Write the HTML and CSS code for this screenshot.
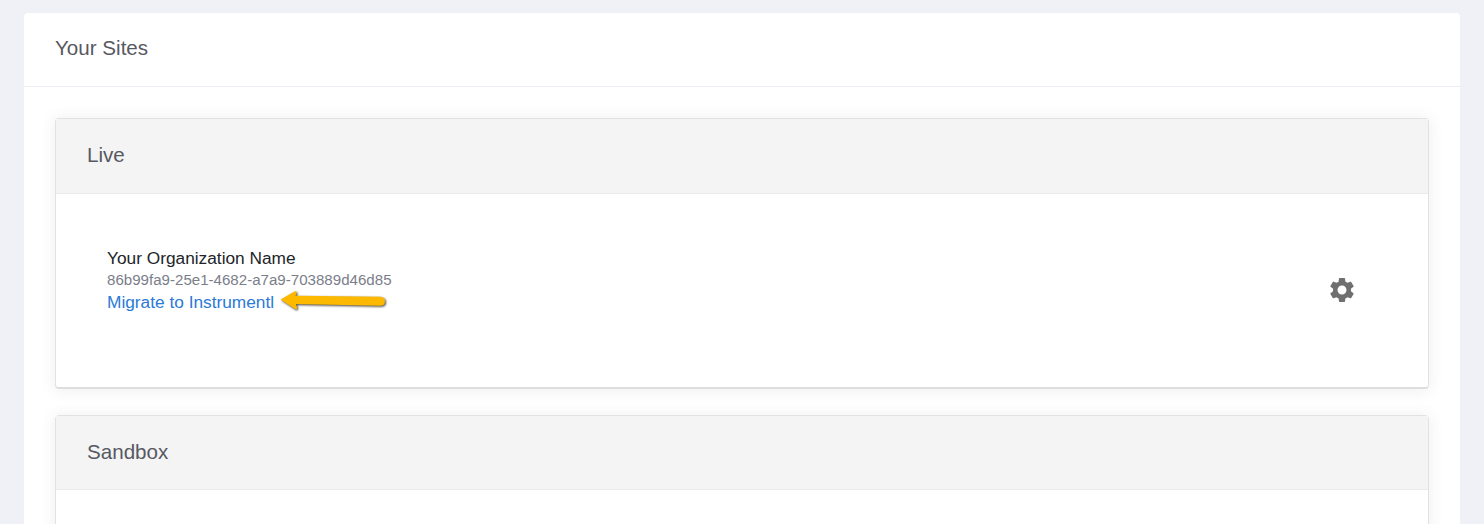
FILE: index.html
```html
<!DOCTYPE html>
<html lang="en">
<head>
    <meta charset="UTF-8">
    <title>Your Sites</title>
    <link rel="stylesheet" href="styles.css">
</head>
<body>
    <div class="main-card">
        <div class="main-header">Your Sites</div>
        <div class="main-body">
            <div class="panel panel-live">
                <div class="panel-header">Live</div>
                <div class="panel-body">
                    <div class="site-info">
                        <div class="site-name">Your Organization Name</div>
                        <div class="site-id">86b99fa9-25e1-4682-a7a9-703889d46d85</div>
                        <div class="site-link-row">
                            <a class="site-link" href="#">Migrate to Instrumentl</a>
                            <svg class="arrow" width="112" height="24" viewBox="0 0 112 24">
                                <path class="arrow-fill" d="M1.5 9.5 L15.5 1.5 Q18 0.5 17.5 3 L16.5 5.7 L101 6.7 Q106 7 106 11.2 Q106 15.7 101 15.7 L17 14 L18 17.5 Q18.5 20 16 19 Z"/>
                            </svg>
                        </div>
                    </div>
                    <svg class="gear" width="30" height="30" viewBox="0 0 24 24">
                        <path d="M19.14 12.94c.04-.3.06-.61.06-.94 0-.32-.02-.64-.07-.94l2.03-1.58a.49.49 0 0 0 .12-.61l-1.92-3.32a.488.488 0 0 0-.59-.22l-2.39.96c-.5-.38-1.03-.7-1.62-.94l-.36-2.54a.484.484 0 0 0-.48-.41h-3.84c-.24 0-.43.17-.47.41l-.36 2.54c-.59.24-1.13.57-1.62.94l-2.39-.96c-.22-.08-.47 0-.59.22L2.74 8.87c-.12.21-.08.47.12.61l2.03 1.58c-.05.3-.09.63-.09.94s.02.64.07.94l-2.03 1.58a.49.49 0 0 0-.12.61l1.92 3.32c.12.22.37.29.59.22l2.39-.96c.5.38 1.03.7 1.62.94l.36 2.54c.05.24.24.41.48.41h3.84c.24 0 .44-.17.47-.41l.36-2.54c.59-.24 1.13-.56 1.62-.94l2.39.96c.22.08.47 0 .59-.22l1.92-3.32c.12-.22.07-.47-.12-.61l-2.01-1.58zM12 15.6c-1.98 0-3.6-1.62-3.6-3.6s1.62-3.6 3.6-3.6 3.6 1.62 3.6 3.6-1.62 3.6-3.6 3.6z"/>
                    </svg>
                </div>
            </div>
            <div class="panel">
                <div class="panel-header">Sandbox</div>
                <div class="panel-body"></div>
            </div>
        </div>
    </div>
</body>
</html>
```

FILE: styles.css
```css
html, body {
    height: 100%;
}
body {
    margin: 0;
    padding: 13px 24px 0;
    box-sizing: border-box;
    overflow: hidden;
    background-color: #f0f1f7;
    font-family: "Liberation Sans", Arial, sans-serif;
}
.main-card {
    background-color: #fff;
    border-radius: 4px 4px 0 0;
    height: 511px;
    overflow: hidden;
}
.main-header {
    height: 73px;
    line-height: 70px;
    padding-left: 31px;
    font-size: 20.6px;
    color: #575962;
    border-bottom: 1px solid #ebedf2;
}
.main-body {
    padding: 31px 31px 0;
}
.panel {
    border: 1px solid #e2e2e2;
    border-radius: 4px;
    box-shadow: 0 1px 15px 1px rgba(69, 65, 78, 0.08);
}
.panel-live {
    height: 268px;
    margin-bottom: 25.5px;
    border-bottom: 2px solid #dedede;
}
.panel-header {
    height: 73.5px;
    line-height: 71px;
    padding-left: 31px;
    font-size: 20.6px;
    color: #575962;
    background-color: #f4f4f4;
    border-bottom: 1px solid #ebebeb;
}
.panel-body {
    display: flex;
    align-items: flex-start;
    justify-content: space-between;
    padding: 54.5px 71px 0 51px;
}
.site-name {
    font-size: 17.3px;
    line-height: 21px;
    color: #212529;
}
.site-id {
    font-size: 15.1px;
    line-height: 22px;
    color: #7b7e8a;
}
.site-link-row {
    display: flex;
    align-items: center;
    height: 22px;
}
.site-link {
    font-size: 17.3px;
    color: #2a7ad6;
    text-decoration: none;
}
.arrow {
    margin-left: 5px;
    flex-shrink: 0;
    filter: drop-shadow(1px 1.5px 1px rgba(40, 34, 20, 0.85));
}
.arrow-fill {
    fill: #fdb900;
}
.gear {
    margin-top: 27px;
    fill: #6f6f6f;
}
```
